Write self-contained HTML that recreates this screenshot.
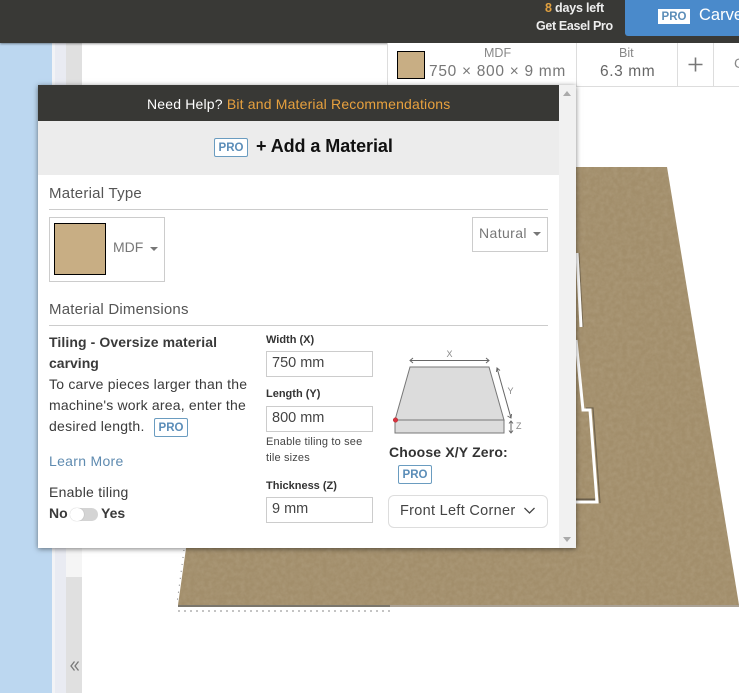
<!DOCTYPE html>
<html><head><meta charset="utf-8"><style>
html,body{margin:0;padding:0;background:#fff}
body{width:739px;height:693px;overflow:hidden;position:relative;font-family:"Liberation Sans",sans-serif;color:#333}
.a{position:absolute}
.t{position:absolute;white-space:nowrap;line-height:20px}
.pro{position:absolute;width:32px;height:17px;border:1px solid #6a9cc0;border-radius:2px;background:#fff;color:#5b8db8;font-weight:bold;font-size:11.5px;line-height:18px;text-align:center}
.inp{position:absolute;left:266px;width:105px;height:24px;border:1px solid #ccc;font-size:14.5px;line-height:22px;text-indent:5px;color:#444}
.lab{font-size:11px;font-weight:bold;color:#333}
.h{font-size:15px;color:#555}
.b{font-size:14px;color:#3a3a3a}
.car{position:absolute;width:0;height:0;border-left:4px solid transparent;border-right:4px solid transparent;border-top:4px solid #777}
</style></head><body>

<div class="a" style="left:0;top:43px;width:52px;height:650px;background:#bcd7f0"></div>
<div class="a" style="left:52px;top:43px;width:3px;height:650px;background:#f2f3f6"></div>
<div class="a" style="left:55px;top:43px;width:11px;height:650px;background:#e9ebf2"></div>
<div class="a" style="left:66px;top:43px;width:16px;height:650px;background:#e0e0e0"></div>
<div class="a" style="left:66px;top:548px;width:16px;height:29px;background:#f5f5f5"></div>
<svg class="a" style="left:70px;top:660px" width="10" height="12" viewBox="0 0 10 12"><path d="M4.500 1.500L1 6l3.500 4.500M8.500 1.500L5 6l3.500 4.500" fill="none" stroke="#777" stroke-width="1.300"/></svg>

<svg class="a" style="left:0;top:0" width="739" height="693">
<defs><filter id="n" x="0" y="0" width="100%" height="100%"><feTurbulence type="fractalNoise" baseFrequency="0.22" numOctaves="3" seed="4"/><feColorMatrix values="0 0 0 0 0.62  0 0 0 0 0.54  0 0 0 0 0.40  0.9 0 0 0 -0.25"/></filter>
<clipPath id="bd"><polygon points="240,167 667,167 739,605 178,605"/></clipPath></defs>
<polygon points="240,167 667,167 739,605 178,605" fill="#a28e6b"/>
<rect x="170" y="160" width="569" height="450" filter="url(#n)" clip-path="url(#bd)" opacity=".35"/>
<path d="M178 606H390" stroke="#4f483b" stroke-width="1.500"/>
<path d="M390 606H739" stroke="#8d8270" stroke-width="1.500"/>
<path d="M178 611H390" stroke="#888" stroke-width="1" stroke-dasharray="2 4"/>
<path d="M184 550L177 603" stroke="#777" stroke-width="1" stroke-dasharray="1 6"/>
<path d="M579 253L583 327" stroke="#5c5242" stroke-width="1" opacity=".6"/>
<path d="M577 253L581 327" stroke="#fff" stroke-width="3"/>
<path d="M586 408H593L600 503" fill="none" stroke="#5c5242" stroke-width="1.200" opacity=".7"/>
<path d="M576 499.500H595" stroke="#5c5242" stroke-width="2" opacity=".8"/>
<path d="M576 340L583 410H590L597 502H576" fill="none" stroke="#fff" stroke-width="3"/>
</svg>

<!-- top bar -->
<div class="a" style="left:0;top:0;width:739px;height:43px;background:#393936;box-shadow:0 1px 2px rgba(0,0,0,.4)"></div>
<div class="a" style="left:625px;top:0;width:114px;height:36px;background:#4a8acb;border-radius:0 0 0 3px"></div>
<div class="a" style="left:658px;top:9px;width:32px;height:15px;background:#fff;color:#5b8db8;font-weight:bold;font-size:11.5px;line-height:16px;text-align:center">PRO</div>
<div class="t" style="left:699px;top:5px;color:#fff;font-size:16.5px">Carve</div>
<div class="t" style="left:545px;top:-2px;font-size:12.5px;font-weight:bold;color:#eee;letter-spacing:-.2px"><span style="color:#e0a040">8</span> days left</div>
<div class="t" style="left:536px;top:16px;font-size:12.5px;font-weight:bold;color:#eee;letter-spacing:-.35px">Get Easel Pro</div>

<!-- toolbar -->
<div class="a" style="left:387px;top:43px;width:352px;height:43px;border-bottom:1px solid #ddd;background:#fff"></div>
<div class="a" style="left:387px;top:43px;width:1px;height:43px;background:#ddd"></div>
<div class="a" style="left:576px;top:43px;width:1px;height:43px;background:#ddd"></div>
<div class="a" style="left:677px;top:43px;width:1px;height:43px;background:#ddd"></div>
<div class="a" style="left:713px;top:43px;width:1px;height:43px;background:#ddd"></div>
<div class="a" style="left:397px;top:51px;width:26px;height:26px;background:#c8ae84;border:1px solid #000"></div>
<div class="t" style="left:484px;top:43px;font-size:12.5px;color:#888">MDF</div>
<div class="t" style="left:429px;top:62px;font-size:15.5px;color:#777;letter-spacing:.7px">750 × 800 × 9 mm</div>
<div class="t" style="left:619px;top:43px;font-size:12.5px;color:#888">Bit</div>
<div class="t" style="left:600px;top:62px;font-size:15.5px;color:#666;letter-spacing:.6px">6.3 mm</div>
<svg class="a" style="left:688px;top:57px" width="15" height="15"><path d="M7.500 .5V14.500M.5 7.500H14.500" stroke="#777" stroke-width="1.600"/></svg>
<div class="t" style="left:734px;top:53px;font-size:14px;color:#888">C</div>

<!-- modal -->
<div class="a" style="left:38px;top:85px;width:538px;height:463px;background:#fff;box-shadow:0 1px 5px rgba(0,0,0,.5)"></div>
<div class="a" style="left:559px;top:85px;width:17px;height:463px;background:#f1f1f1"></div>
<div class="a" style="left:563px;top:91px;border-left:4px solid transparent;border-right:4px solid transparent;border-bottom:5px solid #aaa"></div>
<div class="a" style="left:563px;top:537px;border-left:4px solid transparent;border-right:4px solid transparent;border-top:5px solid #aaa"></div>
<div class="a" style="left:38px;top:85px;width:521px;height:36px;background:#383835"></div>
<div class="t" style="left:147px;top:94px;font-size:14px;color:#fff;letter-spacing:.18px">Need Help? <span style="color:#e8a13e">Bit and Material Recommendations</span></div>
<div class="a" style="left:38px;top:121px;width:521px;height:54px;background:#ececec"></div>
<div class="pro" style="left:214px;top:138px">PRO</div>
<div class="t" style="left:256px;top:136px;font-size:18px;font-weight:bold;color:#111;letter-spacing:-.07px">+ Add a Material</div>

<div class="t h" style="left:49px;top:184px;letter-spacing:.25px">Material Type</div>
<div class="a" style="left:49px;top:209px;width:499px;height:1px;background:#ccc"></div>
<div class="a" style="left:49px;top:217px;width:114px;height:63px;border:1px solid #ccc"></div>
<div class="a" style="left:54px;top:223px;width:50px;height:50px;background:#c8ae84;border:1px solid #000"></div>
<div class="t" style="left:113px;top:237px;font-size:14px;color:#777">MDF</div>
<div class="car" style="left:150px;top:247px"></div>
<div class="a" style="left:472px;top:217px;width:74px;height:33px;border:1px solid #ccc"></div>
<div class="t" style="left:479px;top:223px;font-size:14px;color:#777;letter-spacing:.4px">Natural</div>
<div class="car" style="left:533px;top:232px"></div>

<div class="t h" style="left:49px;top:300px;letter-spacing:.2px">Material Dimensions</div>
<div class="a" style="left:49px;top:325px;width:499px;height:1px;background:#ccc"></div>

<div class="t b" style="left:49px;top:332px;font-weight:bold;letter-spacing:.1px">Tiling - Oversize material</div>
<div class="t b" style="left:49px;top:353px;font-weight:bold">carving</div>
<div class="t b" style="left:49px;top:374px;letter-spacing:.22px">To carve pieces larger than the</div>
<div class="t b" style="left:49px;top:395px;letter-spacing:.2px">machine's work area, enter the</div>
<div class="t b" style="left:49px;top:416px;letter-spacing:.25px">desired length.</div>
<div class="pro" style="left:154px;top:418px">PRO</div>
<div class="t" style="left:49px;top:451px;font-size:14px;color:#5f8bb0;letter-spacing:.3px">Learn More</div>
<div class="t b" style="left:49px;top:482px;letter-spacing:.25px">Enable tiling</div>
<div class="t b" style="left:49px;top:503px;font-weight:bold">No</div>
<div class="a" style="left:70px;top:508px;width:28px;height:13px;border-radius:7px;background:#d4d4d4"></div>
<div class="a" style="left:70px;top:508px;width:14px;height:13px;border-radius:7px;background:#fff;box-shadow:0 0 1px rgba(0,0,0,.3)"></div>
<div class="t b" style="left:101px;top:503px;font-weight:bold">Yes</div>

<div class="t lab" style="left:266px;top:330px">Width (X)</div>
<div class="inp" style="top:351px">750 mm</div>
<div class="t lab" style="left:266px;top:384px">Length (Y)</div>
<div class="inp" style="top:406px">800 mm</div>
<div class="t" style="left:266px;top:432px;font-size:11px;color:#444;letter-spacing:.17px">Enable tiling to see</div>
<div class="t" style="left:266px;top:448px;font-size:11px;color:#444;letter-spacing:.17px">tile sizes</div>
<div class="t lab" style="left:266px;top:476px">Thickness (Z)</div>
<div class="inp" style="top:497px">9 mm</div>

<svg class="a" style="left:380px;top:340px" width="160" height="100" viewBox="380 340 160 100">
<polygon points="410,367 489,367 504,420 395,420" fill="#dcdcdc" stroke="#777" stroke-width="1"/>
<rect x="395" y="420" width="109" height="13" fill="#dcdcdc" stroke="#777" stroke-width="1"/>
<path d="M410 360.500H489M413 358L410 360.500L413 363M486 358L489 360.500L486 363" fill="none" stroke="#666" stroke-width="1"/>
<path d="M497 368L511 418M496.500 372L497 368L500 370.500M507.500 416L511 418L511.500 414" fill="none" stroke="#666" stroke-width="1"/>
<path d="M511 421V433M509 423.500L511 421L513 423.500M509 430.500L511 433L513 430.500" fill="none" stroke="#666" stroke-width="1"/>
<text x="446.500" y="357" font-size="9" fill="#888" font-family="Liberation Sans">X</text>
<text x="507.500" y="394" font-size="9" fill="#888" font-family="Liberation Sans">Y</text>
<text x="516" y="429" font-size="9" fill="#888" font-family="Liberation Sans">Z</text>
<circle cx="395.500" cy="420" r="2.300" fill="#d9333f" stroke="#a33" stroke-width=".5"/>
</svg>
<div class="t" style="left:389px;top:442px;font-size:14px;font-weight:bold;color:#333;letter-spacing:.15px">Choose X/Y Zero:</div>
<div class="pro" style="left:398px;top:465px">PRO</div>
<div class="a" style="left:388px;top:495px;width:158px;height:31px;border:1px solid #ddd;border-radius:6px;background:#fff"></div>
<div class="t" style="left:400px;top:501px;font-size:14.5px;color:#444;letter-spacing:.3px">Front Left Corner</div>
<svg class="a" style="left:523px;top:506px" width="13" height="9"><path d="M1.500 2L6.500 7L11.500 2" fill="none" stroke="#444" stroke-width="1.300"/></svg>

</body></html>
